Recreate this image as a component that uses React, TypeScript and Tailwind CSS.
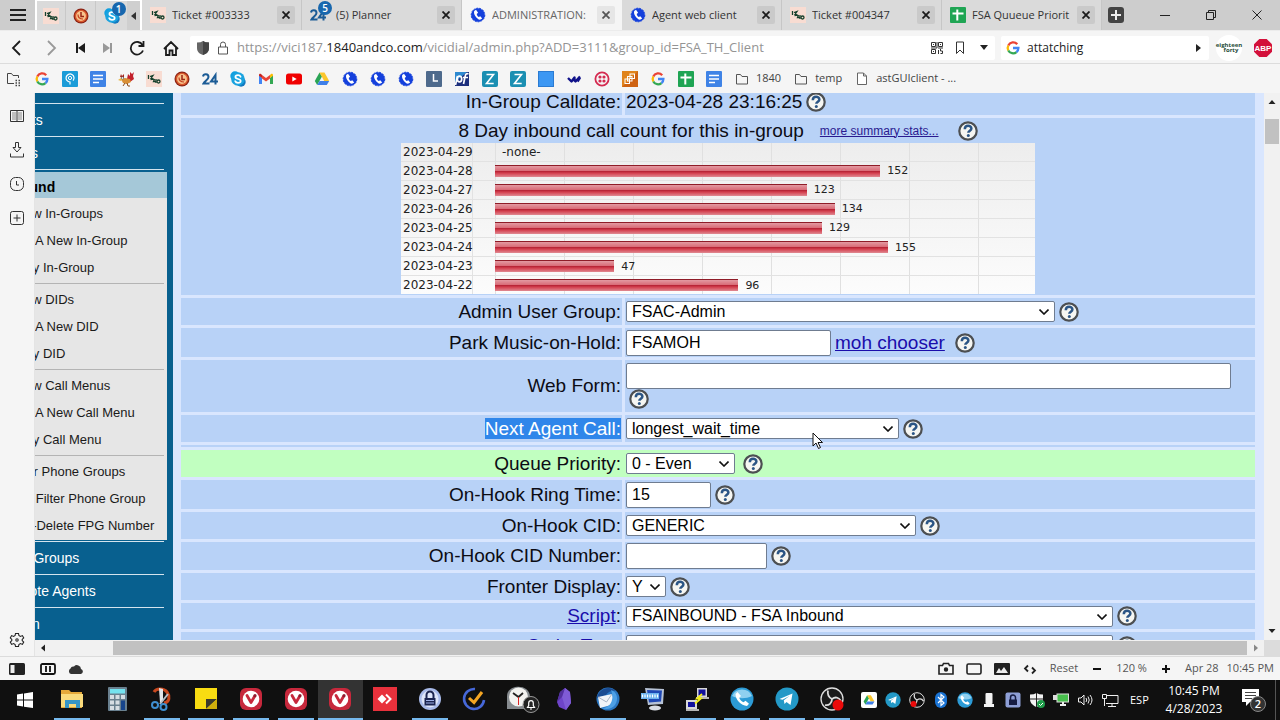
import React from "react";
import clsx from "clsx";

type IconProps = { className?: string };

/* ---------- site icons ---------- */

const Ticket1840 = ({ className = "size-4" }: IconProps) => (
  <svg viewBox="0 0 16 16" className={className}>
    <rect width="16" height="16" fill="#f8dcd2" />
    <g fill="none" stroke="#16402c" strokeWidth="1.300">
      <path d="M2.500 4v4M4 5.500l3-1-2 3 2.500.500-3 .500M8.500 8l-1 2.500h3M10 8v4" />
      <circle cx="12.500" cy="10.500" r="1.500" />
    </g>
  </svg>
);

const RedClock = ({ className = "size-4" }: IconProps) => (
  <svg viewBox="0 0 16 16" className={className}>
    <circle cx="8" cy="8" r="7.500" fill="#8c2415" />
    <circle cx="8" cy="8" r="5.600" fill="#f7c38d" stroke="#d9572b" strokeWidth="1.400" />
    <path d="M8 4V8.500H11" fill="none" stroke="#9a2413" strokeWidth="1.500" />
    <path d="M5 6.500c0 3 2 4.500 5 4.500" fill="none" stroke="#c23d1d" strokeWidth="1.200" />
  </svg>
);

const Skype = ({ className = "size-4" }: IconProps) => (
  <svg viewBox="0 0 16 16" className={className}>
    <circle cx="5" cy="5" r="4.700" fill="#0f9fe0" />
    <circle cx="11" cy="11" r="4.700" fill="#1379bf" />
    <circle cx="8" cy="8" r="6.800" fill="#1aa3df" />
    <path
      d="M10.600 5.800C10.200 4.700 9 4.200 8 4.200c-1.500 0-2.600.7-2.600 1.900 0 2.500 5.300 1.300 5.300 3.800 0 1.200-1.200 1.900-2.700 1.900-1.300 0-2.400-.6-2.800-1.700"
      fill="none" stroke="#fff" strokeWidth="1.700" strokeLinecap="round"
    />
  </svg>
);

const TwentyFour = ({ className = "size-4" }: IconProps) => (
  <svg viewBox="0 0 16 16" className={className} fill="none" stroke="#1c5c96" strokeWidth="2">
    <path d="M1 5.500C1.500 2.500 6.500 2.500 6.500 6 6.500 8.500 3 10 1.500 12.500h6" />
    <path d="M13.500 13.500V4L9 10.500h7" />
  </svg>
);

const BluePhone = ({ className = "size-4" }: IconProps) => (
  <svg viewBox="0 0 16 16" className={className}>
    <circle cx="8" cy="8" r="6.800" fill="#1440dc" stroke="#1440dc" strokeWidth="1" strokeDasharray="2 1" />
    <path
      d="M6 2.800 4.200 4c-1 3.200 2.400 8.200 5.800 8.800l2.200-1.200-1.900-2.400-1.500.8C7.600 9.200 6.900 8 6.700 6.900l1.400-1.100z"
      fill="#fff"
    />
  </svg>
);

const GoogleG = ({ className = "size-4" }: IconProps) => (
  <svg viewBox="0 0 16 16" className={className} fill="none" strokeWidth="2.300">
    <path d="M12.200 4.200A5.400 5.400 0 0 0 3.300 5.500" stroke="#ea4335" />
    <path d="M3.300 5.500a5.400 5.400 0 0 0 0 5" stroke="#fbbc05" />
    <path d="M3.300 10.500a5.400 5.400 0 0 0 8.200 1.600" stroke="#34a853" />
    <path d="M11.500 12.100A5.200 5.200 0 0 0 13.400 8H8" stroke="#4285f4" />
  </svg>
);

const SheetIcon = ({ className = "size-4" }: IconProps) => (
  <svg viewBox="0 0 16 16" className={className}>
    <rect width="16" height="16" rx="1" fill="#1fa554" />
    <path d="M7.300 2.500v11M2.500 6.500h11" stroke="#fff" strokeWidth="2" />
  </svg>
);

const DocIcon = ({ className = "size-4" }: IconProps) => (
  <svg viewBox="0 0 16 16" className={className}>
    <rect width="16" height="16" rx="1" fill="#3f83e6" />
    <path d="M3 4.500h10M3 8h10M3 11.500h6" stroke="#fff" strokeWidth="1.700" />
  </svg>
);

const PinSite = () => (
  <svg viewBox="0 0 16 16" className="size-4">
    <rect width="16" height="16" rx="1" fill="#1b9cd8" />
    <path d="M8 13.500V11a4 4 0 1 1 3-1.300" fill="none" stroke="#fff" strokeWidth="1.200" />
    <circle cx="8" cy="7" r="1.600" fill="none" stroke="#fff" />
  </svg>
);

const Rooster = () => (
  <svg viewBox="0 0 16 16" className="size-4">
    <path d="M9 8l1-5 2 2V1l2 2 2-2-1 4 1 3-4 3-3 1z" fill="#c2202c" />
    <path d="M3 8l4-1 5 1 1 3-4 2-4-1z" fill="#d98f35" />
    <path d="M0 9l3-2 2 1-2 2z" fill="#e8b84a" />
    <path d="M2 6l1-3 1 2 2-2v4z" fill="#a5241d" />
    <circle cx="4.500" cy="7" r="1.200" fill="#fff" stroke="#333" strokeWidth=".5" />
    <path d="M7 12l-2 3M9 12l1 3h2" stroke="#8a4a18" fill="none" />
  </svg>
);

const Gmail = () => (
  <svg viewBox="0 0 16 16" className="size-4">
    <path d="M1 4v9h3V7z" fill="#4285f4" />
    <path d="M15 4v9h-3V7z" fill="#34a853" />
    <path d="M12 7l3-2.300V4c0-1.200-1.300-1.600-2-1L12 4z" fill="#fbbc04" />
    <path d="M1 4.700 4 7V4L3 3c-.9-.6-2 0-2 1z" fill="#c5221f" />
    <path d="M4 4l4 3 4-3v3.500l-4 3-4-3z" fill="#ea4335" />
  </svg>
);

const YouTube = () => (
  <svg viewBox="0 0 16 16" className="size-4">
    <rect y="2.500" width="16" height="11" rx="2.500" fill="#f00000" />
    <path d="M6.300 5.500v5L10.700 8z" fill="#fff" />
  </svg>
);

const Drive = ({ className = "size-4" }: IconProps) => (
  <svg viewBox="0 0 16 16" className={className}>
    <path d="M5.500 1.500 .8 10l2.400 4L8 5.500z" fill="#2aa455" />
    <path d="M5.500 1.500h5L15.200 10h-5z" fill="#fbc62c" />
    <path d="M5.500 10h9.700l-2.400 4H3.200z" fill="#3f7fe8" />
  </svg>
);

const GreyClock = () => (
  <svg viewBox="0 0 16 16" className="size-4">
    <rect width="16" height="16" rx="1" fill="#4e6a8c" />
    <path d="M7.500 3v7h4.500" fill="none" stroke="#fff" strokeWidth="1.500" />
  </svg>
);

const PfIcon = () => (
  <svg viewBox="0 0 16 16" className="size-4">
    <rect x="1" y="1" width="14" height="14" fill="#1d2f7c" />
    <path d="M1 1h12L1 11z" fill="#2e8ad0" />
    <g fill="none" stroke="#fff" strokeWidth="1.700">
      <path d="M3.500 5 1.500 14" />
      <ellipse cx="5.500" cy="8" rx="2.200" ry="2.800" />
      <path d="M14.500 3c-2-.8-3 0-3.300 2L9.500 13M9 6.500h5" />
    </g>
  </svg>
);

const ZIcon = () => (
  <svg viewBox="0 0 16 16" className="size-4">
    <rect width="16" height="16" rx="2" fill="#1b8fb2" />
    <path d="M4.500 3.500h7l-7 9h7.200" fill="none" stroke="#fff" strokeWidth="1.600" />
  </svg>
);

const BlueSquare = () => (
  <svg viewBox="0 0 16 16" className="size-4">
    <rect x=".5" y=".5" width="15" height="15" fill="#3c97f3" stroke="#2b7bd2" />
  </svg>
);

const Wave = () => (
  <svg viewBox="0 0 16 16" className="size-4" fill="none" stroke="#10128a" strokeWidth="2.400" strokeLinejoin="round">
    <path d="M2 7l3.500 3.500L8.500 6.500v3l1 1 4.500-5M11.500 10.500 14 6.500" />
  </svg>
);

const Twilio = () => (
  <svg viewBox="0 0 16 16" className="size-4">
    <circle cx="8" cy="8" r="6.600" fill="none" stroke="#d42a50" strokeWidth="1.800" />
    <g fill="#d42a50">
      <circle cx="6" cy="6" r="1.600" />
      <circle cx="10" cy="6" r="1.600" />
      <circle cx="6" cy="10" r="1.600" />
      <circle cx="10" cy="10" r="1.600" />
    </g>
  </svg>
);

const AwsBox = () => (
  <svg viewBox="0 0 16 16" className="size-4">
    <rect width="16" height="16" fill="#cf6312" />
    <path d="M0 0h16L0 16z" fill="#e0841c" />
    <g fill="none" stroke="#fff">
      <rect x="3" y="8" width="4.500" height="4.500" />
      <rect x="5.500" y="5.500" width="4.500" height="4.500" />
      <rect x="8" y="3" width="4.500" height="4.500" />
    </g>
  </svg>
);

const FolderDots = () => (
  <svg viewBox="0 0 16 16" className="size-4" fill="none" stroke="#444">
    <path d="M8 12.500H1.500v-10h4l1.500 2h5.500V7" />
    <path d="M9.500 9.500H11M12.500 9.500H14M9.500 12H11M12.500 12H14M9.500 14.500H11M12.500 14.500H14" strokeWidth="1.500" />
  </svg>
);

const Folder = () => (
  <svg viewBox="0 0 16 16" className="size-4" fill="none" stroke="#555">
    <path d="M2.500 13V3.500h4l1.500 2h5.500V13z" />
  </svg>
);

const PageIcon = () => (
  <svg viewBox="0 0 16 16" className="size-4" fill="#fff" stroke="#666">
    <path d="M3.500 2h6l3 3v8.500h-9zM9.500 2v3h3" />
  </svg>
);

/* ---------- tab strip ---------- */

const CloseX = ({ active = false }: { active?: boolean }) => (
  <button
    aria-label="Close tab"
    className={clsx("flex size-[18px] shrink-0 items-center justify-center rounded-[2px]", active ? "bg-[#e6e6e6]" : "bg-[#cacaca]")}
  >
    <svg viewBox="0 0 8 8" className="size-2" stroke={active ? "#555" : "#1c1c1c"} strokeWidth="1.800">
      <path d="M.5.5l7 7M7.500.5l-7 7" />
    </svg>
  </button>
);

const TABS = [
  { title: "Ticket #003333", Icon: Ticket1840 },
  { title: "(5) Planner", Icon: TwentyFour, badge: "5" },
  { title: "ADMINISTRATION:", Icon: BluePhone, active: true },
  { title: "Agent web client", Icon: BluePhone },
  { title: "Ticket #004347", Icon: Ticket1840 },
  { title: "FSA Quueue Priorit", Icon: SheetIcon },
];

const Badge = ({ children }: { children: React.ReactNode }) => (
  <span className="absolute -top-[6px] left-2 flex size-[14px] items-center justify-center rounded-full bg-[#1767ae] text-[10px] leading-[14px] font-semibold text-white">
    {children}
  </span>
);

const TabStrip = () => (
  <div className="flex h-[30px] shrink-0 bg-[#cdcdcd]">
    <button aria-label="Menu" className="flex w-[35px] shrink-0 items-center justify-center">
      <svg viewBox="0 0 16 12" className="h-3 w-4" stroke="#222" strokeWidth="2">
        <path d="M0 1h16M0 6h16M0 11h16" />
      </svg>
    </button>
    <div className="flex shrink-0 border-x-2 border-t border-white bg-[#dadada]">
      <button aria-label="Ticket" className="flex w-7 items-center justify-center"><Ticket1840 /></button>
      <button aria-label="Time tracker" className="flex w-[31px] items-center justify-center border-x border-[#c8c8c8]"><RedClock /></button>
      <button aria-label="Skype" className="flex w-[31px] items-center justify-center">
        <span className="relative"><Skype /><Badge>1</Badge></span>
      </button>
      <button aria-label="Collapse" className="flex w-[13px] items-center justify-center bg-[#cfcfcf]">
        <svg viewBox="0 0 5 8" className="h-2 w-[5px]" fill="#333"><path d="M5 0v8L0 4z" /></svg>
      </button>
    </div>
    {TABS.map(({ title, Icon, badge, active }) => (
      <div
        key={title}
        className={clsx(
          "flex min-w-0 flex-[0_1_160px] items-center gap-[6px] border-r pr-[6px] pl-2",
          active ? "border-[#f5f5f5] bg-[#f5f5f5]" : "border-[#c6c6c6] bg-[#dadada]"
        )}
      >
        <span className="relative shrink-0"><Icon />{badge && <Badge>{badge}</Badge>}</span>
        <span
          className={clsx(
            "min-w-0 flex-1 overflow-hidden text-[11px] whitespace-nowrap",
            active ? "text-[#666]" : "text-[#333]",
            badge && "pl-1"
          )}
        >
          {title}
        </span>
        <CloseX active={active} />
      </div>
    ))}
    <button aria-label="New tab" className="ml-[6px] flex w-4 shrink-0 items-center justify-center">
      <svg viewBox="0 0 16 16" className="size-4">
        <rect width="16" height="16" rx="3" fill="#444" />
        <path d="M8 3v10M3 8h10" stroke="#eee" strokeWidth="2" />
      </svg>
    </button>
    <div className="ml-auto flex shrink-0">
      {[
        { label: "Minimize", d: "M0 5.500h10" },
        { label: "Restore", d: "M.5 2.500h7v7h-7zM2.500 2.500v-2h7v7h-2" },
        { label: "Close", d: "M.5.5l9 9M9.500.5l-9 9" },
      ].map(({ label, d }) => (
        <button key={label} aria-label={label} className="flex w-[46px] items-center justify-center">
          <svg viewBox="0 0 10 10" className="size-[10px]" fill="none" stroke="#222"><path d={d} /></svg>
        </button>
      ))}
    </div>
  </div>
);

/* ---------- address bar ---------- */

interface NavButtonProps {
  label: string;
  children: React.ReactNode;
  muted?: boolean;
  narrow?: boolean;
}

const NavButton = ({ label, children, muted, narrow }: NavButtonProps) => (
  <button aria-label={label} className={clsx("flex h-6 items-center justify-center", narrow ? "w-[26px]" : "w-[34px]")}>
    <svg viewBox="0 0 16 16" className="size-4" fill="none" stroke={muted ? "#999" : "#1c1c1c"} strokeWidth="1.800">
      {children}
    </svg>
  </button>
);

const AddressBar = () => (
  <div className="flex h-[33px] shrink-0 items-center border-t border-[#ececec] bg-[#f5f5f5] pt-px pr-2">
    <div className="flex w-[190px] shrink-0 items-center">
      <NavButton label="Back"><path d="M11 1 4 8l7 7" /></NavButton>
      <NavButton label="Forward" muted><path d="M5 1l7 7-7 7" /></NavButton>
      <NavButton label="Rewind" narrow><path d="M4 3v10" strokeWidth="2" /><path d="M12 3v10L5 8z" fill="#1c1c1c" stroke="none" /></NavButton>
      <NavButton label="Fast forward" muted narrow><path d="M12 3v10" strokeWidth="2" /><path d="M4 3v10l7-5z" fill="#999" stroke="none" /></NavButton>
      <NavButton label="Reload"><path d="M13.500 5A6.300 6.300 0 1 0 14 10.500M14.500 1v5h-5" /></NavButton>
      <NavButton label="Home"><path d="M1 9l7-7 7 7M3 7.500V15h3.500v-4.500h3V15H13V7.500" /></NavButton>
    </div>
    <div className="flex h-6 min-w-0 flex-1 items-center gap-2 rounded-[2px] bg-white px-[7px]">
      <svg viewBox="0 0 12 14" className="h-[14px] w-3 shrink-0">
        <path d="M0 1.500Q4 1.500 6 0q2 1.500 6 1.500V7c0 4-3 6-6 7-3-1-6-3-6-7z" fill="#666" />
        <path d="M6 0q2 1.500 6 1.500V7c0 4-3 6-6 7z" fill="#444" />
      </svg>
      <svg viewBox="0 0 12 14" className="h-[14px] w-3 shrink-0" fill="none" stroke="#555">
        <path d="M1.500 6h9v7h-9zM3.500 6V3.500a2.500 2.500 0 0 1 5 0V6" />
      </svg>
      <div className="min-w-0 flex-1 overflow-hidden text-[13px] whitespace-nowrap text-[#949494]">
        https://vici187.<span className="text-[#222]">1840andco.com</span>/vicidial/admin.php?ADD=3111&amp;group_id=FSA_TH_Client
      </div>
      <button aria-label="QR code">
        <svg viewBox="0 0 12 12" className="size-3" fill="none" stroke="#333">
          <path d="M.5.5h4v4h-4zM7.500.5h4v4h-4zM.5 7.500h4v4h-4zM6 0v6H0M7 6h5M7.500 8v4M9.500 7v2h2v2.500h-2M2 2.500h1M9 2.500h1M2 9.500h1" />
        </svg>
      </button>
      <button aria-label="Bookmark" className="ml-[3px]">
        <svg viewBox="0 0 12 14" className="h-[14px] w-3" fill="none" stroke="#333"><path d="M2.500 1h7v11.500L6 9l-3.500 3.500z" /></svg>
      </button>
      <button aria-label="Bookmark list" className="ml-[6px]">
        <svg viewBox="0 0 8 5" className="h-[5px] w-2" fill="#222"><path d="M0 0h8L4 5z" /></svg>
      </button>
    </div>
    <form className="ml-[6px] flex h-6 w-[208px] shrink-0 items-center gap-[6px] rounded-[2px] bg-white px-1">
      <GoogleG />
      <input aria-label="Search" defaultValue="attatching" className="w-0 flex-1 text-xs text-[#222] outline-none" />
      <svg viewBox="0 0 5 8" className="mr-1 h-2 w-[5px]" fill="#222"><path d="M0 0v8l5-4z" /></svg>
    </form>
    <div className="ml-[7px] flex size-[26px] shrink-0 flex-col items-center justify-center rounded-full bg-white text-[6px] leading-[5px] font-bold text-[#1f4c39]">
      <span>eighteen</span>
      <span className="pl-1">forty</span>
    </div>
    <svg viewBox="0 0 18 18" className="ml-3 size-[18px] shrink-0">
      <path d="M5.300 0h7.400L18 5.300v7.400L12.700 18H5.300L0 12.700V5.300z" fill="#d3103b" />
      <text x="9" y="12" fontSize="8" fontWeight="bold" fontFamily="Liberation Sans, sans-serif" fill="#fff" textAnchor="middle">ABP</text>
    </svg>
  </div>
);

const BOOKMARKS = [
  FolderDots, GoogleG, PinSite, DocIcon, Rooster, Ticket1840, RedClock, TwentyFour, Skype, Gmail, YouTube, Drive,
  BluePhone, BluePhone, BluePhone, GreyClock, PfIcon, ZIcon, ZIcon, BlueSquare, Wave, Twilio, AwsBox, GoogleG,
  SheetIcon, DocIcon,
];

const BookmarksBar = () => (
  <nav className="flex h-[30px] shrink-0 items-center gap-3 overflow-hidden border-t border-[#dcdcdc] bg-[#f5f5f5] pl-[6px] text-[11px] text-[#444]">
    {BOOKMARKS.map((Icon, i) => (
      <a key={i} href="#" className="shrink-0"><Icon /></a>
    ))}
    <a href="#" className="flex shrink-0 items-center gap-[6px]"><Folder />1840</a>
    <a href="#" className="flex shrink-0 items-center gap-[6px]"><Folder />temp</a>
    <a href="#" className="flex shrink-0 items-center gap-[6px]"><PageIcon />astGUIclient - ...</a>
  </nav>
);

/* ---------- browser side panel ---------- */

const SidePanel = () => (
  <aside className="flex w-[35px] shrink-0 flex-col items-center gap-[18px] border-r border-[#e4e4e4] bg-[#f5f5f5] pt-[15px] pb-2">
    <button aria-label="Reading list">
      <svg viewBox="0 0 16 16" className="size-4" fill="none" stroke="#333">
        <path d="M1.500 2.500h13v11h-13zM8 2.500v11" />
        <path d="M3 5h4M3 7h4M3 9h4M3 11h4M9 5h4M9 7h4M9 9h4M9 11h4" stroke="#888" />
      </svg>
    </button>
    <button aria-label="Downloads">
      <svg viewBox="0 0 16 16" className="size-4" fill="none" stroke="#333">
        <path d="M6.500.5h3v5H12L8 10 4 5.500h2.500zM1.500 11.500v3.500h13v-3.500" />
      </svg>
    </button>
    <button aria-label="History">
      <svg viewBox="0 0 16 16" className="size-4" fill="none" stroke="#333">
        <rect x="1.500" y="1.500" width="13" height="13" rx="5" />
        <path d="M7.500 5v4H10" />
      </svg>
    </button>
    <button aria-label="Add panel">
      <svg viewBox="0 0 16 16" className="size-4" fill="none" stroke="#333">
        <rect x="1.500" y="1.500" width="13" height="13" rx="2" />
        <path d="M8 4.500v7M4.500 8h7" />
      </svg>
    </button>
    <button aria-label="Settings" className="mt-auto">
      <svg viewBox="0 0 16 16" className="size-4" fill="none" stroke="#222" strokeWidth="1.100">
        <path d="M6.500 1.500h3l.4 2 1.500.9 2-.8 1.300 2.400-1.500 1.400v1.200l1.500 1.400-1.300 2.400-2-.8-1.500.9-.4 2h-3l-.4-2-1.500-.9-2 .8L1.300 10l1.500-1.400V7.400L1.300 6l1.300-2.400 2 .8 1.500-.9z" />
        <circle cx="8" cy="8" r="1.200" />
      </svg>
    </button>
  </aside>
);

/* ---------- admin menu ---------- */

const INBOUND_LINKS = [
  ["Show In-Groups", "Add A New In-Group", "Copy In-Group"],
  ["Show DIDs", "Add A New DID", "Copy DID"],
  ["Show Call Menus", "Add A New Call Menu", "Copy Call Menu"],
  ["Filter Phone Groups", "Add Filter Phone Group", "Add-Delete FPG Number"],
];

const MenuItem = ({ children }: { children: string }) => (
  <div className="mr-[9px] flex h-[33px] items-center border-b border-[#d4e4ee] text-white">
    <a href="#">{children}</a>
  </div>
);

// the page is scrolled right, so the left part of the menu is hidden
const AdminMenu = () => (
  <nav className="-ml-[35px] w-[173px] shrink-0 bg-[#08608f] font-[Liberation_Sans,sans-serif] text-sm">
    <div className="mr-[9px] h-[11px] border-b border-[#d4e4ee]" />
    <MenuItem>Scripts</MenuItem>
    <MenuItem>Filters</MenuItem>
    <div className="mt-[2px] mr-[6px] bg-[#e6e6e6] text-black">
      <div className="flex h-[26px] items-center bg-[#a5c8d8] pt-1 font-bold"><a href="#">Inbound</a></div>
      {INBOUND_LINKS.map((group) => (
        <ul key={group[0]} className="mr-[3px] border-b border-[#b4b4b4] pt-[3px] pb-px text-[13px] last:border-0 last:pb-0">
          {group.map((link) => (
            <li key={link} className="flex h-[27px] items-center pl-[9px] whitespace-nowrap text-[#1a1a1a]">
              <a href="#">{link}</a>
            </li>
          ))}
        </ul>
      ))}
    </div>
    <div className="mr-[9px] h-[2px] border-b border-[#d4e4ee]" />
    <MenuItem>User Groups</MenuItem>
    <MenuItem>Remote Agents</MenuItem>
    <MenuItem>Admin</MenuItem>
  </nav>
);

/* ---------- in-group form ---------- */

const Help = () => (
  <button type="button" aria-label="Help" className="shrink-0">
    <svg viewBox="0 0 20 20" className="size-5">
      <circle cx="10" cy="10" r="8.700" fill="#f6f6f2" stroke="#4c4f52" strokeWidth="2.200" />
      <path d="M6.800 8.200c0-4.600 6.600-4.200 6.600-.7 0 2.100-3.100 2.200-3.100 4.300" fill="none" stroke="#2b5585" strokeWidth="2.500" />
      <circle cx="10.300" cy="14.500" r="1.500" fill="#2b5585" />
    </svg>
  </button>
);

const Select = ({ id, value, className }: { id: string; value: string; className: string }) => (
  <span className={clsx("relative flex h-[21px] min-w-0", className)}>
    <select
      id={id}
      className="w-full appearance-none rounded-[2px] border border-[#6f7c90] bg-white pl-[5px] text-base leading-[18px] text-black"
    >
      <option>{value}</option>
    </select>
    <svg viewBox="0 0 10 6" className="pointer-events-none absolute top-2 right-[6px] h-[6px] w-[10px]" fill="none" stroke="#111" strokeWidth="1.600">
      <path d="M.5.5 5 5 9.500.5" />
    </svg>
  </span>
);

const TextBox = ({ id, value = "", className }: { id: string; value?: string; className: string }) => (
  <input
    id={id}
    defaultValue={value}
    className={clsx("h-[26px] min-w-0 rounded-[2px] border border-[#6f7c90] bg-white px-[5px] text-base text-black", className)}
  />
);

interface RowProps {
  id?: string;
  label: React.ReactNode;
  height?: string;
  green?: boolean;
  children?: React.ReactNode;
}

const Row = ({ id, label, height = "h-[27px]", green, children }: RowProps) => {
  const cell = green ? "bg-[#c1ffc0]" : "bg-[#b8d2f7]";
  return (
    <div className={clsx("grid shrink-0 grid-cols-[441fr_630fr] gap-[3px]", height, green && "bg-[#c1ffc0]")}>
      <div className={clsx("flex items-center justify-end pr-px", cell)}>
        <label htmlFor={id} className="whitespace-nowrap">{label}</label>
      </div>
      <div className={clsx("flex min-w-0 flex-wrap content-center items-center gap-x-1 pl-px", cell)}>{children}</div>
    </div>
  );
};

const CALLS = [
  { date: "2023-04-29", count: 0 },
  { date: "2023-04-28", count: 152 },
  { date: "2023-04-27", count: 123 },
  { date: "2023-04-26", count: 134 },
  { date: "2023-04-25", count: 129 },
  { date: "2023-04-24", count: 155 },
  { date: "2023-04-23", count: 47 },
  { date: "2023-04-22", count: 96 },
];

// count that would fill the whole width of the plot
const CHART_MAX = 213;

const CallChart = () => (
  <table className="mx-auto h-[151px] w-[634px] table-fixed border-collapse bg-gradient-to-b from-[#ededed] to-[#fcfcfc] font-[DejaVu_Sans,sans-serif] text-[#222]">
    <tbody>
      {CALLS.map(({ date, count }) => (
        <tr key={date} className="border-b border-[#e2e2e2] last:border-0">
          <th scope="row" className="w-[71px] border-r border-[#e2e2e2] p-0 pl-[2px] text-left text-xs leading-none font-normal whitespace-nowrap">
            {date}
          </th>
          <td className="w-[23px] p-0" />
          <td className="bg-[repeating-linear-gradient(90deg,#e0e0e0_0_1px,transparent_1px_69px)] p-0">
            <div className="flex items-center gap-[7px] text-[11px] leading-none">
              {count > 0 ? (
                <>
                  <div
                    className="h-3 border-t border-[#8f1c28] bg-[linear-gradient(#e39aa2,#d96a76_45%,#b92537_50%,#d4404f_65%,#e08a92)]"
                    style={{ width: `${(count / CHART_MAX) * 100}%` }}
                  />
                  {count}
                </>
              ) : (
                <span className="pl-[7px] text-xs leading-none">-none-</span>
              )}
            </div>
          </td>
        </tr>
      ))}
    </tbody>
  </table>
);

const InGroupForm = () => (
  <form className="-mt-[5px] flex min-w-0 flex-1 flex-col gap-[3px] pr-[9px] pl-2 font-[Liberation_Sans,sans-serif] text-[19px] leading-[22px] text-[#0c0c14]">
    <Row label="In-Group Calldate:">2023-04-28 23:16:25<Help /></Row>
    <section className="h-[177px] shrink-0 bg-[#b8d2f7]">
      <div className="flex h-[25px] items-center justify-center">
        8 Day inbound call count for this in-group
        <a href="#" className="mr-[19px] ml-4 text-xs text-[#2a1a90] underline">more summary stats...</a>
        <Help />
      </div>
      <CallChart />
    </section>
    <Row id="user_group" label="Admin User Group:">
      <Select id="user_group" value="FSAC-Admin" className="w-[429px]" /><Help />
    </Row>
    <Row id="moh" label="Park Music-on-Hold:" height="h-[29px]">
      <TextBox id="moh" value="FSAMOH" className="w-[205px]" />
      <a href="#" className="mr-[6px] text-[#1a0dab] underline">moh chooser</a>
      <Help />
    </Row>
    <Row id="web_form" label="Web Form:" height="h-[52px]">
      <TextBox id="web_form" className="w-[605px]" />
      <span className="flex w-full pl-[3px]"><Help /></span>
    </Row>
    <Row id="next_agent" label={<span className="bg-[#2f86ea] text-white">Next Agent Call:</span>}>
      <Select id="next_agent" value="longest_wait_time" className="w-[273px]" /><Help />
    </Row>
    <div className="h-[2px] shrink-0 bg-[#b8d2f7]" />
    <Row id="priority" label="Queue Priority:" green>
      <Select id="priority" value="0 - Even" className="mr-1 w-[109px]" /><Help />
    </Row>
    <Row id="ring_time" label="On-Hook Ring Time:" height="h-[29px]">
      <TextBox id="ring_time" value="15" className="w-[85px]" /><Help />
    </Row>
    <Row id="cid" label="On-Hook CID:">
      <Select id="cid" value="GENERIC" className="w-[290px]" /><Help />
    </Row>
    <Row id="cid_number" label="On-Hook CID Number:" height="h-[28px]">
      <TextBox id="cid_number" className="w-[141px]" /><Help />
    </Row>
    <Row id="fronter" label="Fronter Display:">
      <Select id="fronter" value="Y" className="w-10" /><Help />
    </Row>
    <Row id="script" label={<><a href="#" className="text-[#1a0dab] underline">Script</a>:</>} height="h-[26px]">
      <Select id="script" value="FSAINBOUND - FSA Inbound" className="w-[487px]" /><Help />
    </Row>
    <Row id="script_two" label={<><a href="#" className="text-[#1a0dab] underline">Script Two</a>:</>}>
      <Select id="script_two" value="" className="w-[487px]" /><Help />
    </Row>
  </form>
);

const Arrow = ({ d, fill = "#222" }: { d: string; fill?: string }) => (
  <svg viewBox="0 0 8 8" className="size-2" fill={fill}><path d={d} /></svg>
);

const PageView = () => (
  <div className="flex min-w-0 flex-1 flex-col">
    <div className="flex min-h-0 flex-1">
      <main className="flex min-w-0 flex-1 overflow-hidden bg-[#d9e6fe]">
        <AdminMenu />
        <InGroupForm />
      </main>
      <div className="flex w-4 shrink-0 flex-col items-center bg-[#f1f1f1] py-[5px]">
        <Arrow d="M4 2l3.500 4h-7z" />
        <div className="mt-[13px] h-[25px] w-[14px] bg-[#c1c1c1]" />
        <div className="flex-1" />
        <Arrow d="M.5 2h7L4 6z" />
      </div>
    </div>
    <div className="flex h-4 shrink-0 bg-[#f1f1f1]">
      <div className="flex w-[78px] shrink-0 items-center pl-1"><Arrow d="M6 .5v7L2 4z" /></div>
      <div className="my-px flex-1 bg-[#c1c1c1]" />
      <div className="flex w-[17px] items-center justify-center"><Arrow d="M2 .5v7L6 4z" fill="#888" /></div>
      <div className="w-4 bg-[#dcdcdc]" />
    </div>
  </div>
);

/* ---------- status bar ---------- */

const StatusBar = () => (
  <div className="flex h-6 shrink-0 items-center border-t border-[#dcdcdc] bg-[#f5f5f5] pr-[6px] pl-[9px] text-[11px] text-[#555]">
    <div className="flex items-center gap-3">
      <button aria-label="Panel">
        <svg viewBox="0 0 16 12" className="h-3 w-4"><rect width="16" height="12" rx="1.500" fill="#222" /><rect x="1.500" y="2" width="4" height="8" fill="#eee" /></svg>
      </button>
      <button aria-label="Break mode" className="ml-[3px]">
        <svg viewBox="0 0 16 12" className="h-3 w-4" fill="none" stroke="#111" strokeWidth="1.800"><rect x="1" y="1" width="14" height="10" rx="1.500" /><path d="M6 3v6M10 3v6" /></svg>
      </button>
      <button aria-label="Sync">
        <svg viewBox="0 0 16 12" className="h-3 w-4" fill="#333"><path d="M3 11a3 3 0 0 1-.5-5.500A3 3 0 0 1 6 3.500 4 4 0 0 1 13 6a2.600 2.600 0 0 1 0 5z" /></svg>
      </button>
    </div>
    <div className="ml-auto flex items-center gap-3">
      <button aria-label="Capture page">
        <svg viewBox="0 0 16 13" className="h-[13px] w-4" fill="none" stroke="#222" strokeWidth="1.600"><path d="M1 3.500h3.500l1-2h5l1 2H15v8.500H1z" /><circle cx="8" cy="7.500" r="1.400" fill="#222" /></svg>
      </button>
      <button aria-label="Tiling">
        <svg viewBox="0 0 16 12" className="h-3 w-4" fill="none" stroke="#222" strokeWidth="1.600"><rect x="1" y="1" width="14" height="10" rx="1.500" /></svg>
      </button>
      <button aria-label="Images">
        <svg viewBox="0 0 16 12" className="h-3 w-4"><rect width="16" height="12" rx="1" fill="#222" /><path d="M2 10l3-5 2 3 3-4 4 6z" fill="#eee" /></svg>
      </button>
      <button aria-label="Page actions">
        <svg viewBox="0 0 16 12" className="h-3 w-4" fill="none" stroke="#222" strokeWidth="1.800"><path d="M6 2.500 3 5.500l3 3M10 4.500l3 3-3 3" /></svg>
      </button>
      <button>Reset</button>
      <button aria-label="Zoom out" className="mx-[3px]"><svg viewBox="0 0 8 8" className="size-2" stroke="#111" strokeWidth="2"><path d="M0 4h8" /></svg></button>
      <span>120 %</span>
      <button aria-label="Zoom in" className="mx-[3px]"><svg viewBox="0 0 8 8" className="size-2" stroke="#111" strokeWidth="2"><path d="M0 4h8M4 0v8" /></svg></button>
      <span className="flex gap-2"><span>Apr 28</span><span>10:45 PM</span></span>
    </div>
  </div>
);

/* ---------- taskbar ---------- */

const Vivaldi = () => (
  <svg viewBox="0 0 24 24" className="size-6">
    <rect x="1" y="1" width="22" height="22" rx="6" fill="#c7283c" />
    <circle cx="12" cy="12" r="8.300" fill="#fff" />
    <path d="M8 8.500l4 7 3.500-6" fill="none" stroke="#c7283c" strokeWidth="2.800" strokeLinecap="round" strokeLinejoin="round" />
    <circle cx="16" cy="8.700" r="1.600" fill="#8f1d30" />
  </svg>
);

const Explorer = () => (
  <svg viewBox="0 0 24 24" className="size-6">
    <path d="M1 3h8l2 2h11v16H1z" fill="#e5a93a" />
    <path d="M1 7h22v13H1z" fill="#fadb7c" />
    <path d="M5 21v-8h15v8h-4v-4H9v4z" fill="#3796c6" />
  </svg>
);

const Calculator = () => (
  <svg viewBox="0 0 24 24" className="size-6">
    <rect x="3" y="0" width="19" height="24" rx="1" fill="#69808f" />
    <rect x="5" y="2" width="15" height="4.500" fill="#74e2ef" />
    <g fill="#d5dde3">
      <rect x="5" y="8" width="4" height="4" /><rect x="10.500" y="8" width="4" height="4" /><rect x="16" y="8" width="4" height="4" />
      <rect x="5" y="13.500" width="4" height="4" /><rect x="10.500" y="13.500" width="4" height="4" />
      <rect x="5" y="19" width="4" height="4" /><rect x="10.500" y="19" width="4" height="4" />
    </g>
    <rect x="16" y="13.500" width="4" height="9.500" fill="#17458c" />
  </svg>
);

const Snip = () => (
  <svg viewBox="0 0 24 24" className="size-6" fill="none">
    <path d="M4 5c2-4 10-4 13 0s3 10-3 11" stroke="#c7481f" strokeWidth="3" />
    <path d="M9 1l1 15 3-2V2z" fill="#e3e6ea" />
    <path d="M18 7l-8 10" stroke="#b9c0c8" strokeWidth="2" />
    <circle cx="5" cy="18" r="3" stroke="#3f8fd0" strokeWidth="2" />
    <circle cx="13.500" cy="20" r="3" stroke="#3f8fd0" strokeWidth="2" />
  </svg>
);

const Notes = () => (
  <svg viewBox="0 0 24 24" className="size-6">
    <path d="M1 1h22v21H1z" fill="#f8dc12" />
    <path d="M12 22V12h11z" fill="#3b3a2c" />
    <path d="M12 22h11V12z" fill="#cfae0c" />
  </svg>
);

const AnyDesk = () => (
  <svg viewBox="0 0 24 24" className="size-6">
    <rect width="24" height="24" fill="#e8313c" />
    <path d="M9 7.500l4.500 4.500L9 16.500 4.500 12z" fill="#fff" />
    <path d="M13 7.500l4.500 4.500-4.500 4.500" fill="none" stroke="#fff" strokeWidth="2" />
  </svg>
);

const Lock = () => (
  <svg viewBox="0 0 24 24" className="size-6">
    <circle cx="12" cy="12" r="11" fill="#a9bbea" />
    <circle cx="12" cy="12" r="8.500" fill="#dfe6fa" />
    <path d="M8.500 11V8a3.500 3.500 0 0 1 7 0v3" fill="none" stroke="#1b2450" strokeWidth="2" />
    <rect x="6.500" y="11" width="11" height="7.500" fill="#1b2450" />
    <path d="M8 13.500h8M8 16h8" stroke="#9eb0e6" />
  </svg>
);

const TickTick = () => (
  <svg viewBox="0 0 24 24" className="size-6" fill="none">
    <path d="M13 2A10 10 0 1 0 22 13" stroke="#4668d9" strokeWidth="2.600" />
    <path d="M7 11l5 4.500L20 5" stroke="#f5a623" strokeWidth="3" />
  </svg>
);

const AlarmClock = () => (
  <svg viewBox="-9 0 44 28" className="h-7 w-11">
    <path d="M1 24V11C1-1 24-2 24 12v12z" fill="#868b8f" />
    <circle cx="12.500" cy="12" r="9.500" fill="#f3f3f1" />
    <path d="M7 8l5.500 4L17 8" fill="none" stroke="#222" strokeWidth="1.800" />
    <path d="M12.500 12v8" stroke="#d22" />
    <circle cx="25" cy="19.500" r="8" fill="#222" stroke="#999" />
    <path d="M21.500 22.500h7l-1.200-2V18a2.300 2.300 0 0 0-4.600 0v2.500zM24 24h2" fill="none" stroke="#fff" strokeWidth="1.200" />
  </svg>
);

const Obsidian = () => (
  <svg viewBox="0 0 24 24" className="size-6">
    <path d="M13 1l5 4 1 11-5 7-7-3-2-5 3-10z" fill="#6e44c9" />
    <path d="M13 1l-3 9 4 13 5-7-1-11z" fill="#7f5bd6" />
    <path d="M13 1l-5 4-3 10 5-5z" fill="#53309f" />
  </svg>
);

const Thunderbird = () => (
  <svg viewBox="0 0 24 24" className="size-6">
    <circle cx="12" cy="12" r="11.500" fill="#2b78c4" />
    <path d="M1 11C2 3 12-3 20 4c-5-1-8 1-10 4z" fill="#1b4c92" />
    <path d="M2 10l14-3 3 10-15 4z" fill="#f2f4f8" />
    <path d="M2 10l8.500 5L16 7" fill="none" stroke="#a9b4c4" />
    <path d="M15 3c6 2 8 9 4 15-3 4-9 5-13 3 8 0 13-8 9-18z" fill="#4da0e6" />
  </svg>
);

const RemotePc = () => (
  <svg viewBox="0 0 24 24" className="size-6">
    <path d="M4 1l19 1-1 15-15 1z" fill="#b7c3d6" />
    <path d="M6 3l15 .5-1 11-12 1z" fill="#1f48b5" />
    <path d="M0 6h18v6H0z" fill="#6db3ee" />
    <path d="M1.500 7.500v3M4 7.500v3M6.500 7.500v3M9 7.500v3M11.500 7.500v3M14 7.500v3M16.500 7.500v3" stroke="#fff" strokeWidth="1.200" />
    <ellipse cx="14" cy="21" rx="6" ry="2.500" fill="#d9dde4" />
  </svg>
);

const Putty = () => (
  <svg viewBox="0 0 24 24" className="size-6">
    <path d="M11 1h10v9H11zM0 13h11v9H0z" fill="#d8d8d8" />
    <path d="M12.500 2.500h7v6h-7zM2 15h7v5H2z" fill="#10109c" />
    <path d="M10 10h13v2H10zM0 22h13v2H0z" fill="#b5b5b5" />
    <path d="M16 7l-5 4.500 4 0-6 5" fill="none" stroke="#f2ee1c" strokeWidth="1.800" />
  </svg>
);

const PhoneBall = ({ className = "size-6" }: IconProps) => (
  <svg viewBox="0 0 24 24" className={className}>
    <circle cx="12" cy="12" r="11.500" fill="#2c9bd6" />
    <path d="M2 9a11 11 0 0 1 20 0c-6 3-14 3-20 0z" fill="#8fd0f0" />
    <path d="M7.500 5L5.500 7c0 6 5.500 11.500 11.500 12l2-2.200-3.500-3-2 1.500c-2-.8-3.500-2.600-4.300-4.500L11 9z" fill="#fff" />
  </svg>
);

const Telegram = ({ className = "size-6" }: IconProps) => (
  <svg viewBox="0 0 24 24" className={className}>
    <circle cx="12" cy="12" r="11.500" fill="#2399c7" />
    <path d="M4.500 12l13-5.500L15.500 18l-4-3-2 2-.7-3.700 5.700-4.300-7 3.800z" fill="#fff" />
  </svg>
);

const Obs = () => (
  <svg viewBox="0 0 24 24" className="size-6" fill="none">
    <circle cx="12" cy="12" r="11" fill="#1a1a1a" stroke="#ddd" strokeWidth="1.300" />
    <path d="M8 3.500c-1 5 1 7 4 8.500M12 12c4-3 7-1 9 2M12 12c0 4-3 7-7 6" stroke="#ddd" strokeWidth="1.800" />
    <circle cx="18" cy="18" r="5.500" fill="#ea0a0a" />
  </svg>
);

const TASKS = [
  { name: "File Explorer", Icon: Explorer, open: true },
  { name: "Calculator", Icon: Calculator },
  { name: "Snipping Tool", Icon: Snip, open: true },
  { name: "Sticky Notes", Icon: Notes, open: true },
  { name: "Vivaldi 1", Icon: Vivaldi, open: true },
  { name: "Vivaldi 2", Icon: Vivaldi, open: true },
  { name: "Vivaldi 3", Icon: Vivaldi, open: true, active: true },
  { name: "AnyDesk", Icon: AnyDesk },
  { name: "KeePass", Icon: Lock, open: true },
  { name: "TickTick", Icon: TickTick },
  { name: "Alarms", Icon: AlarmClock },
  { name: "Obsidian", Icon: Obsidian },
  { name: "Thunderbird", Icon: Thunderbird, open: true },
  { name: "Remote PC", Icon: RemotePc },
  { name: "PuTTY", Icon: Putty, open: true },
  { name: "Phone", Icon: PhoneBall, open: true },
  { name: "Telegram", Icon: Telegram, open: true },
  { name: "OBS Studio", Icon: Obs, open: true },
];

const Tray = () => (
  <div className="ml-auto flex items-center gap-2">
    <span className="flex size-4 items-center justify-center rounded-[2px] bg-white"><Drive className="size-3" /></span>
    <Telegram className="size-4" />
    <svg viewBox="0 0 16 16" className="size-4" fill="none">
      <circle cx="8" cy="8" r="7.300" stroke="#ddd" />
      <path d="M5.500 2c-1 3.500.5 5 2.500 6M8 8c3-2 5-1 6.500 1M8 8c0 3-2 5-5 4.500" stroke="#ddd" strokeWidth="1.300" />
      <circle cx="4.500" cy="12" r="3" fill="#ea0a0a" />
    </svg>
    <svg viewBox="0 0 16 16" className="size-4">
      <rect x="2" width="12" height="16" rx="6" fill="#1b74d4" />
      <path d="M5 5l6 6-3 2.500v-11L11 5l-6 6" fill="none" stroke="#fff" strokeWidth="1.200" />
    </svg>
    <PhoneBall className="size-4" />
    <svg viewBox="0 0 16 16" className="size-4" fill="#f2f2f2"><rect x="4.500" y="1" width="7" height="11" rx="1" /><rect x="3" y="12" width="10" height="3" /></svg>
    <svg viewBox="0 0 16 16" className="size-4">
      <rect x=".5" y=".5" width="15" height="15" rx="2" fill="#8e9fd6" />
      <path d="M5.500 8V5.500a2.500 2.500 0 0 1 5 0V8" fill="none" stroke="#161c42" strokeWidth="1.500" />
      <rect x="4" y="7.500" width="8" height="5.500" fill="#161c42" />
    </svg>
    <svg viewBox="0 0 16 16" className="size-4">
      <path d="M1 2.500Q5 2.500 7.500 1q2.500 1.500 6.500 1.500V7c0 4-3 6.500-6.500 8C4 13.500 1 11 1 7z" fill="#f2f2f2" />
      <path d="M7.500 1v14M1 7h13" stroke="#222" />
      <circle cx="12" cy="12" r="4" fill="#1f9d4a" />
      <path d="M10 12l1.500 1.500L14 11" fill="none" stroke="#fff" />
    </svg>
    <svg viewBox="0 0 16 16" className="size-4">
      <rect x="4" y="2" width="11.500" height="8" fill="#48c04d" stroke="#ddd" />
      <path d="M7 13h6M10 10v4" stroke="#eee" strokeWidth="2" />
      <rect y="3" width="4" height="5" fill="#ddd" />
    </svg>
    <svg viewBox="0 0 16 16" className="size-4" fill="none" stroke="#eee"><path d="M1.500 6v4H4l3 3V3L4 6zM9 6q1.500 2 0 4M11 4.500q2.500 3.500 0 7M13 3q4 5 0 10" /></svg>
    <svg viewBox="0 0 18 16" className="h-4 w-[18px]" fill="none" stroke="#eee"><path d="M5 3.500h12v8H5M11 11.500V14M7 14.500h8M1.500 2.500h4v4h-4zM3.500 7v7" /></svg>
    <span className="ml-[3px] w-[22px] text-[11px]">ESP</span>
    <div className="ml-[3px] w-[62px] text-center text-xs leading-[18px]">10:45 PM<br />4/28/2023</div>
    <svg viewBox="0 0 26 26" className="ml-2 size-[26px]">
      <path d="M1 2h17v13H9l-4 4v-4H1z" fill="#fff" />
      <path d="M4 5.500h11M4 8.500h11M4 11.500h7" stroke="#444" />
      <circle cx="17" cy="17" r="7.500" fill="#333" stroke="#888" />
      <text x="17" y="21" fontSize="11" fontWeight="600" fontFamily="Open Sans, sans-serif" fill="#fff" textAnchor="middle">2</text>
    </svg>
    <div className="mr-1 h-10 w-px bg-[#555]" />
  </div>
);

const Taskbar = () => (
  <footer className="flex h-10 shrink-0 items-stretch bg-[#101010] text-white">
    <button aria-label="Start" className="flex w-[50px] shrink-0 items-center justify-center">
      <svg viewBox="0 0 16 16" className="size-4" fill="#fff">
        <path d="M0 2.500 6 1.600v6H0zM7 1.400 16 0v7.600H7zM0 8.500h6v6l-6-.9zM7 8.500h9V16l-9-1.300z" />
      </svg>
    </button>
    <div className="grid w-[804px] grid-cols-[repeat(18,minmax(0,1fr))]">
      {TASKS.map(({ name, Icon, open, active }) => (
        <button key={name} aria-label={name} className={clsx("flex flex-col items-center justify-end", active && "bg-[#333]")}>
          <span className="flex h-[38px] items-center"><Icon /></span>
          <span className={clsx("h-[2px]", active ? "w-full" : "w-9", open && "bg-[#76b9ed]")} />
        </button>
      ))}
    </div>
    <Tray />
  </footer>
);

export default function App() {
  return (
    <div className="relative flex h-screen flex-col overflow-hidden bg-[#f5f5f5] font-[Open_Sans,sans-serif]">
      <TabStrip />
      <AddressBar />
      <BookmarksBar />
      <div className="flex min-h-0 flex-1">
        <SidePanel />
        <PageView />
      </div>
      <StatusBar />
      <Taskbar />
      {/* mouse pointer */}
      <svg viewBox="0 0 12 18" className="pointer-events-none absolute top-[432px] left-[812px] h-[18px] w-3">
        <path d="M1 1v13l3-3 2.500 5.500 2-1L6 10.500h4.500z" fill="#fff" stroke="#111" />
      </svg>
    </div>
  );
}
